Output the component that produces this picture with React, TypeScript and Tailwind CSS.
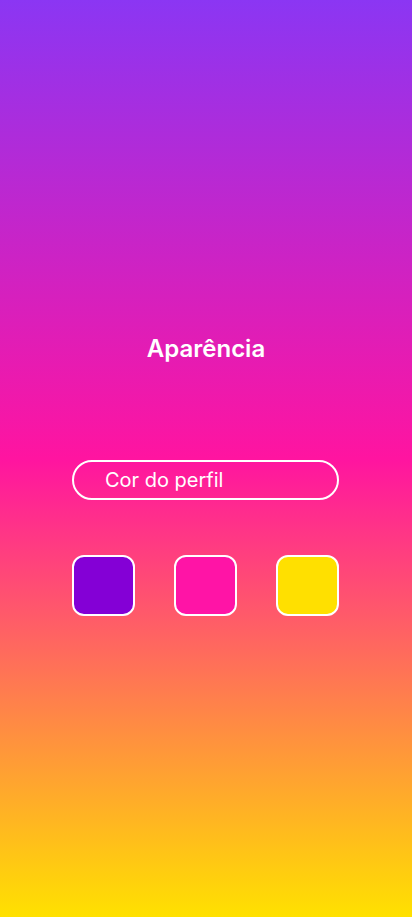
const colors = ['bg-[#8400d6]', 'bg-[#ff14a6]', 'bg-[#ffe000]'];

export default function App() {
  return (
    <div className="h-[917px] w-full bg-linear-to-b/srgb from-[#8b36f3] via-[#ff14a0] to-[#ffe100] font-['Inter',sans-serif] text-white">
      <div className="flex flex-col pt-[334px]">
        <h1 className="text-center text-[24px] leading-[30px] font-semibold">Aparência</h1>

        <div className="mt-[96px] ml-[72px] flex h-[40px] w-[267px] items-center rounded-full border-2 border-white pl-[31px]">
          <span className="text-[20px] leading-none">Cor do perfil</span>
        </div>

        <div className="mt-[55px] ml-[72px] flex w-[267px] justify-between">
          {colors.map((c) => (
            <button key={c} className={`h-[61px] w-[63px] rounded-[12px] border-2 border-white ${c}`} />
          ))}
        </div>
      </div>
    </div>
  );
}
